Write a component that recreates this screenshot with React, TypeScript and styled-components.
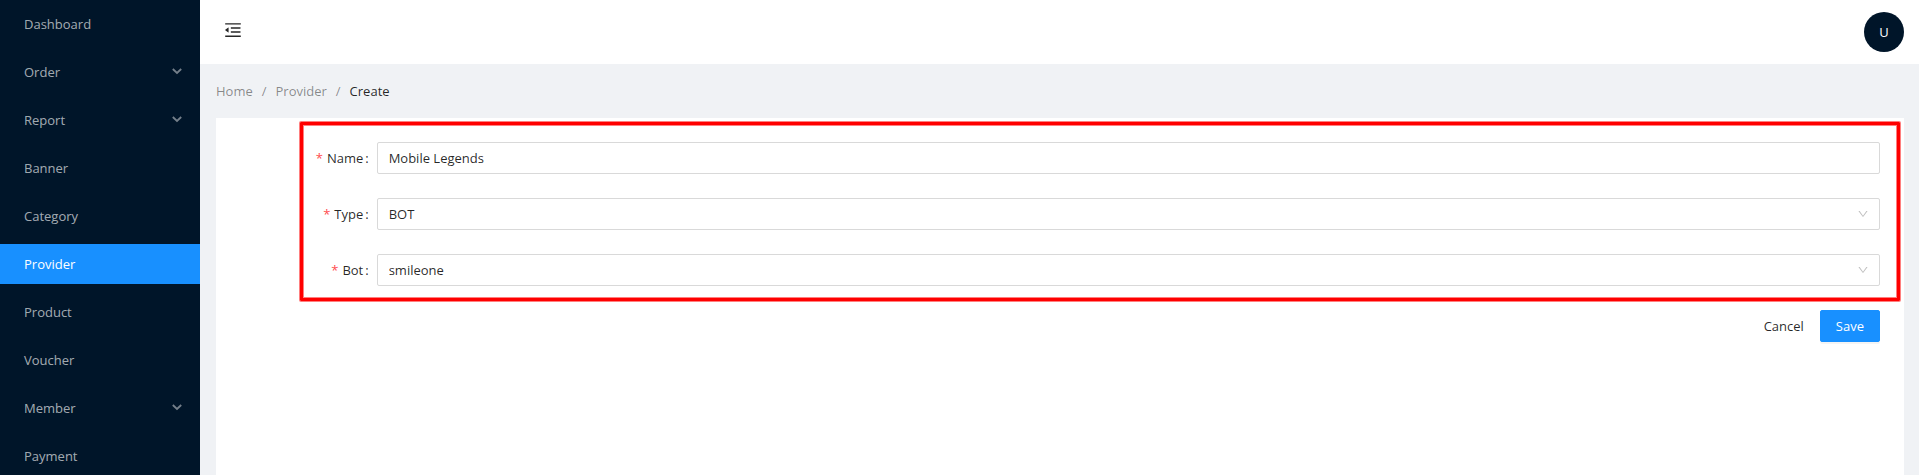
import React, { useState } from "react";
import styled, { createGlobalStyle } from "styled-components";
import { AiOutlineDown, AiOutlineMenuFold } from "react-icons/ai";

const GlobalStyle = createGlobalStyle`
  *, *::before, *::after { box-sizing: border-box; }
  body {
    margin: 0;
    background: #f0f2f5;
    color: rgba(0, 0, 0, 0.85);
    font-family: "Segoe UI", "Open Sans", sans-serif;
    font-size: 13px;
    line-height: 22px;
  }
  button, input, select { font: inherit; color: inherit; }
`;

const Layout = styled.div`
  display: flex;
  height: 100vh;
`;

const Sidebar = styled.nav`
  flex: 0 0 200px;
  background: #001529;
  overflow-y: auto;
  scrollbar-width: none;
`;

const Menu = styled.ul`
  display: flex;
  flex-direction: column;
  gap: 8px;
  margin: 0;
  padding: 4px 0;
  list-style: none;
`;

const MenuLink = styled.a<{ $active: boolean }>`
  display: flex;
  align-items: center;
  justify-content: space-between;
  height: 40px;
  padding: 0 18px 0 24px;
  background: ${(p) => (p.$active ? "#1890ff" : "transparent")};
  color: ${(p) => (p.$active ? "#fff" : "rgba(255, 255, 255, 0.65)")};
  text-decoration: none;

  svg { opacity: 0.7; }
`;

const Main = styled.div`
  flex: 1;
  min-width: 0;
  display: flex;
  flex-direction: column;
`;

const Header = styled.header`
  flex: none;
  display: flex;
  justify-content: space-between;
  height: 64px;
  padding: 0 15px 0 23px;
  background: #fff;
`;

const FoldButton = styled.button`
  display: flex;
  align-items: center;
  height: 60px;
  padding: 0;
  border: 0;
  background: none;
  font-size: 20px;
  cursor: pointer;
`;

const Avatar = styled.button`
  align-self: center;
  width: 40px;
  height: 40px;
  padding: 0;
  border: 0;
  border-radius: 50%;
  background: #001529;
  color: #fff;
  cursor: pointer;
`;

const Content = styled.main`
  flex: 1;
  min-height: 0;
  display: flex;
  flex-direction: column;
  gap: 16px;
  padding: 16px 15px 0 16px;
`;

const Breadcrumb = styled.ol`
  display: flex;
  margin: 0;
  padding: 0;
  list-style: none;
  color: rgba(0, 0, 0, 0.85);

  li + li::before {
    content: "/";
    margin: 0 9px;
    color: rgba(0, 0, 0, 0.45);
  }

  a {
    color: rgba(0, 0, 0, 0.45);
    text-decoration: none;
  }
`;

const Card = styled.form`
  flex: 1;
  padding: 24px;
  background: #fff;
`;

const Fields = styled.div`
  position: relative;
  display: grid;
  gap: 24px;
  margin-bottom: 24px;

  &::after {
    content: "";
    position: absolute;
    inset: -20px -20px -15px 60px;
    border: 3px solid #f00;
    border-radius: 1px;
    box-shadow: 0 0 0 1px rgba(255, 0, 0, 0.5), inset 0 0 0 1px rgba(255, 0, 0, 0.5);
    pointer-events: none;
  }
`;

const Field = styled.div`
  display: grid;
  grid-template-columns: 1fr 11fr;
  align-items: center;
`;

const Label = styled.label`
  justify-self: end;
  display: flex;
  margin-right: 8px;

  &::before {
    content: "*";
    margin-right: 4px;
    color: #ff4d4f;
  }

  &::after {
    content: ":";
    margin-left: 2px;
  }
`;

const TextInput = styled.input`
  width: 100%;
  height: 32px;
  padding: 0 11px;
  border: 1px solid #d9d9d9;
  border-radius: 2px;
  background: #fff;
  outline: none;
`;

const SelectBox = styled.div`
  display: grid;
  align-items: center;

  > * { grid-area: 1 / 1; }

  svg {
    justify-self: end;
    margin-right: 11px;
    color: rgba(0, 0, 0, 0.25);
    font-size: 12px;
    pointer-events: none;
  }
`;

const Select = styled(TextInput).attrs({ as: "select" })`
  appearance: none;
`;

const Actions = styled.div`
  display: flex;
  justify-content: flex-end;
`;

const Button = styled.button<{ $primary?: boolean }>`
  height: 32px;
  padding: 0 15px;
  border: 1px solid ${(p) => (p.$primary ? "#1890ff" : "transparent")};
  border-radius: 2px;
  background: ${(p) => (p.$primary ? "#1890ff" : "transparent")};
  box-shadow: ${(p) => (p.$primary ? "0 2px 0 rgba(0, 0, 0, 0.045)" : "none")};
  color: ${(p) => (p.$primary ? "#fff" : "inherit")};
  cursor: pointer;
`;

const Arrow = () => (
  <svg width="10" height="8" viewBox="0 0 10 8" fill="none" stroke="currentColor" strokeWidth="1.8" aria-hidden="true">
    <path d="M0.8 1L5 5L9.2 1" />
  </svg>
);

const items = [
  { label: "Dashboard" },
  { label: "Order", nested: true },
  { label: "Report", nested: true },
  { label: "Banner" },
  { label: "Category" },
  { label: "Provider" },
  { label: "Product" },
  { label: "Voucher" },
  { label: "Member", nested: true },
  { label: "Payment" },
];

export default function App() {
  const [name, setName] = useState("Mobile Legends");

  return (
    <>
      <GlobalStyle />
      <Layout>
        <Sidebar aria-label="Main">
          <Menu>
            {items.map((item) => (
              <li key={item.label}>
                <MenuLink href="#" $active={item.label === "Provider"}>
                  {item.label}
                  {item.nested && <Arrow />}
                </MenuLink>
              </li>
            ))}
          </Menu>
        </Sidebar>
        <Main>
          <Header>
            <FoldButton type="button" aria-label="Collapse menu">
              <AiOutlineMenuFold />
            </FoldButton>
            <Avatar type="button">U</Avatar>
          </Header>
          <Content>
            <Breadcrumb>
              <li><a href="#">Home</a></li>
              <li><a href="#">Provider</a></li>
              <li>Create</li>
            </Breadcrumb>
            <Card onSubmit={(e: React.FormEvent) => e.preventDefault()}>
              <Fields>
                <Field>
                  <Label htmlFor="name">Name</Label>
                  <TextInput
                    id="name"
                    value={name}
                    onChange={(e: React.ChangeEvent<HTMLInputElement>) => setName(e.target.value)}
                  />
                </Field>
                <Field>
                  <Label htmlFor="type">Type</Label>
                  <SelectBox>
                    <Select id="type">
                      <option>BOT</option>
                    </Select>
                    <AiOutlineDown />
                  </SelectBox>
                </Field>
                <Field>
                  <Label htmlFor="bot">Bot</Label>
                  <SelectBox>
                    <Select id="bot">
                      <option>smileone</option>
                    </Select>
                    <AiOutlineDown />
                  </SelectBox>
                </Field>
              </Fields>
              <Actions>
                <Button type="button">Cancel</Button>
                <Button type="submit" $primary>Save</Button>
              </Actions>
            </Card>
          </Content>
        </Main>
      </Layout>
    </>
  );
}
